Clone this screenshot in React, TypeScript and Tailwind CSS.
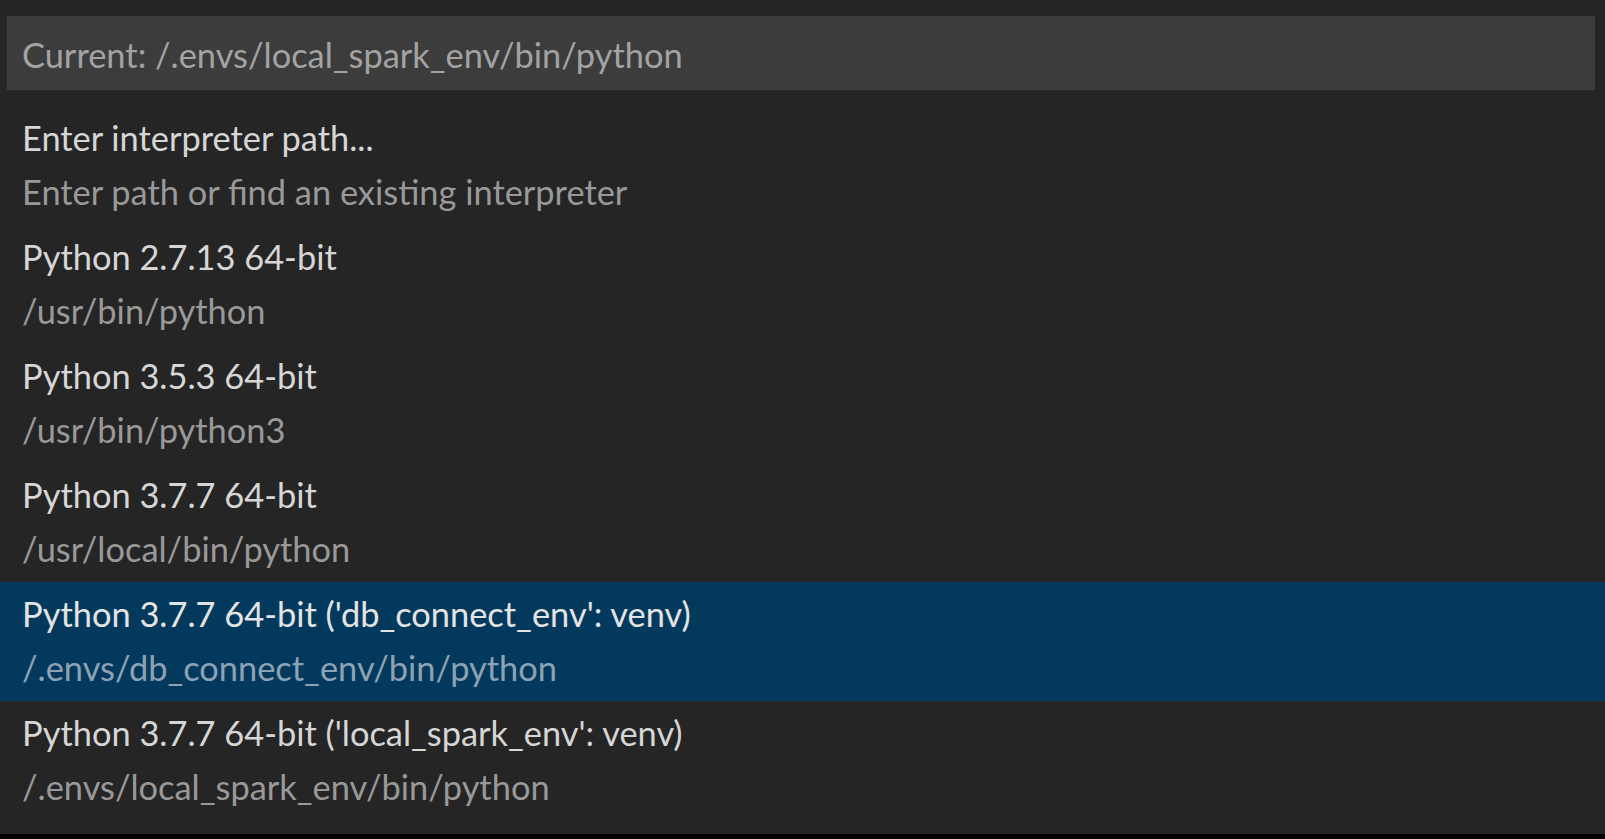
const items = [
  { label: 'Enter interpreter path...', detail: 'Enter path or find an existing interpreter' },
  { label: 'Python 2.7.13 64-bit', detail: '/usr/bin/python' },
  { label: 'Python 3.5.3 64-bit', detail: '/usr/bin/python3' },
  { label: 'Python 3.7.7 64-bit', detail: '/usr/local/bin/python' },
  { label: "Python 3.7.7 64-bit ('db_connect_env': venv)", detail: '/.envs/db_connect_env/bin/python', active: true },
  { label: "Python 3.7.7 64-bit ('local_spark_env': venv)", detail: '/.envs/local_spark_env/bin/python' },
];

export default function App() {
  return (
    <div className="h-[839px] w-full flex flex-col bg-black font-['Lato',sans-serif] text-[34.4px] overflow-hidden">
      <div className="h-[834px] bg-[#252526] flex flex-col">
        <div className="pt-[16px] px-[7px] pr-[10px]">
          <div className="h-[74px] bg-[#3c3c3c] pl-[15px] leading-[77px] text-[#a3a3a3] whitespace-nowrap">
            Current: /.envs/local_spark_env/bin/python
          </div>
        </div>
        <ul className="mt-[16px] flex flex-col">
          {items.map((item) => (
            <li
              key={item.label}
              className={`h-[119px] pl-[22px] pt-[7px] whitespace-nowrap ${item.active ? 'bg-[#04395e]' : ''}`}
            >
              <div className={`leading-[50px] ${item.active ? 'text-[#e4e4e4]' : 'text-[#d6d6d6]'}`}>{item.label}</div>
              <div className={`mt-[4px] leading-[50px] ${item.active ? 'text-[#8da2b3]' : 'text-[#999999]'}`}>
                {item.detail}
              </div>
            </li>
          ))}
        </ul>
      </div>
    </div>
  );
}
